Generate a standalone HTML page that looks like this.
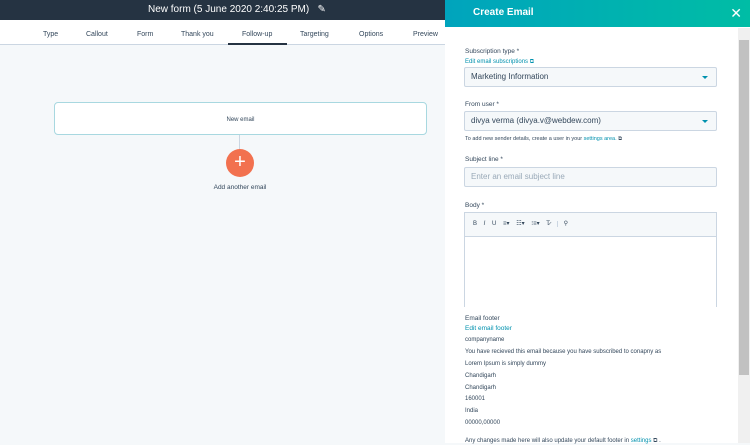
<!DOCTYPE html><html><head><style>
*{margin:0;padding:0;box-sizing:border-box}
body{width:750px;height:443px;overflow:hidden;font-family:"Liberation Sans",sans-serif;background:#f5f8fa;position:relative}
.a{position:absolute}
.top{left:0;top:0;width:445px;height:20px;background:#253342;color:#fff;font-size:10px;line-height:20px}
.tabs{left:0;top:20px;width:445px;height:25px;background:#fff;border-bottom:1px solid #cbd6e2;font-size:7px;color:#33475b}
.tabs span{position:absolute;top:11px}
.panel{left:445px;top:0;width:305px;height:443px;background:#fff}
.ph{left:0;top:0;width:305px;height:27px;background:linear-gradient(90deg,#00a4bd,#00bda5);color:#fff;font-weight:bold;font-size:10px;line-height:26px;padding-left:28px}
.lbl{font-size:6.5px;color:#33475b;left:20px}
.lnk{font-size:6px;color:#0091ae;left:20px}
.sel{left:19px;width:253px;height:20px;background:#f5f8fa;border:1px solid #cbd6e2;border-radius:2px;font-size:8px;color:#33475b;line-height:18px;padding-left:6px}
.sel i{position:absolute;right:8px;top:8px;border:3px solid transparent;border-top:3.5px solid #0091ae}
.ft{font-size:6px;color:#33475b;left:20px}
</style></head><body>
<div class="a top"><span style="position:absolute;left:148px">New form (5 June 2020 2:40:25 PM) &nbsp;&nbsp;✎</span></div>
<div class="a tabs">
<span style="left:43px">Type</span><span style="left:86px">Callout</span><span style="left:137px">Form</span><span style="left:181px">Thank you</span><span style="left:242px">Follow-up</span><span style="left:300px">Targeting</span><span style="left:359px">Options</span><span style="left:413px">Preview</span>
<div class="a" style="left:228px;top:23px;width:59px;height:2px;background:#253342"></div>
</div>
<div class="a" style="left:54px;top:102px;width:373px;height:33px;background:#fff;border:1px solid #a8d8e0;border-radius:4px;font-size:6px;color:#33475b;text-align:center;line-height:34px">New email</div>
<div class="a" style="left:239px;top:135px;width:1px;height:15px;background:#cbd6e2"></div>
<div class="a" style="left:226px;top:149px;width:28px;height:28px;border-radius:50%;background:#f2714f;color:#fff;font-size:20px;text-align:center;line-height:27px">+</div>
<div class="a" style="left:190px;top:184px;width:100px;text-align:center;font-size:6.5px;color:#33475b">Add another email</div>
<div class="a panel">
<div class="a ph">Create Email<span style="position:absolute;right:8px;top:0;font-size:14px;font-weight:normal">✕</span></div>
<div class="a" style="left:293px;top:28px;width:12px;height:415px;background:#f0f0f0"></div>
<div class="a" style="left:294px;top:40px;width:10px;height:335px;background:#c1c1c1"></div>
<div class="a lbl" style="top:48px">Subscription type *</div>
<div class="a lnk" style="top:59px">Edit email subscriptions ⧉</div>
<div class="a sel" style="top:67px">Marketing Information<i></i></div>
<div class="a lbl" style="top:101px">From user *</div>
<div class="a sel" style="top:111px">divya verma (divya.v@webdew.com)<i></i></div>
<div class="a ft" style="top:136px;font-size:5.5px">To add new sender details, create a user in your <span style="color:#0091ae">settings area.</span> ⧉</div>
<div class="a lbl" style="top:156px">Subject line *</div>
<div class="a sel" style="top:167px;color:#99a9b8">Enter an email subject line</div>
<div class="a lbl" style="top:202px">Body *</div>
<div class="a" style="left:19px;top:212px;width:253px;height:95px;border:1px solid #cbd6e2;border-bottom:none">
<div style="height:24px;background:#f5f8fa;border-bottom:1px solid #cbd6e2;font-size:6px;color:#33475b;line-height:23px;padding-left:8px;word-spacing:5px">B <i>I</i> U ≡▾ ☷▾ ⁝≡▾ T̷ <span style="border-left:1px solid #cbd6e2;padding-left:6px">⚲</span></div>
</div>
<div class="a lbl" style="top:315px">Email footer</div>
<div class="a lnk" style="top:325px;font-size:6.5px">Edit email footer</div>
<div class="a ft" style="top:337px">companyname</div>
<div class="a ft" style="top:349px">You have recieved this email because you have subscribed to conapny as</div>
<div class="a ft" style="top:361px">Lorem Ipsum is simply dummy</div>
<div class="a ft" style="top:373px">Chandigarh</div>
<div class="a ft" style="top:385px">Chandigarh</div>
<div class="a ft" style="top:396px">160001</div>
<div class="a ft" style="top:408px">India</div>
<div class="a ft" style="top:420px">00000,00000</div>
<div class="a ft" style="top:438px">Any changes made here will also update your default footer in <span style="color:#0091ae">settings</span> ⧉ .</div>
</div>
</body></html>
